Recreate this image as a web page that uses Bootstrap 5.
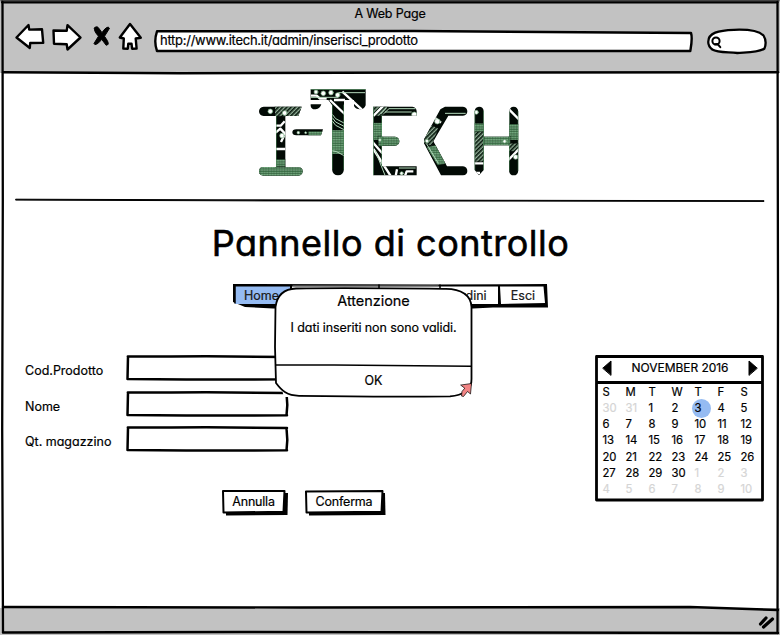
<!DOCTYPE html>
<html lang="it">
<head>
<meta charset="utf-8">
<meta name="viewport" content="width=device-width, initial-scale=1">
<title>A Web Page</title>
<link href="https://cdn.jsdelivr.net/npm/bootstrap@5.3.0/dist/css/bootstrap.min.css" rel="stylesheet">
<style>
body{font-family:Inter,"Open Sans",sans-serif;font-feature-settings:"cv11";font-size:12.5px;line-height:16px;color:#000;-webkit-text-stroke:.2px #000;width:780px;height:635px;overflow:hidden}
svg{display:block;overflow:visible;fill:none;stroke:#000;stroke-linecap:round;stroke-linejoin:round}
.sketch{position:absolute;left:0;top:0;z-index:0}
.over{z-index:1}
.browser-bar{height:73px;background:#c2c2c2}
.browser-title{height:22px;padding-top:6px;letter-spacing:-.17px}
.tools{height:51px;padding-left:15px}
.url{width:540px;height:23px;margin-left:11px;padding:2px 0 0 6px;font-size:13px;letter-spacing:-.27px}
.search{margin-left:12px}
.page-area{height:535px}
.logo{padding-top:7px}
.divider{margin:4px 0 0 15px}
.title{font-size:36px;line-height:44px;letter-spacing:.5px;font-weight:400;margin:18px 0 0;padding-left:1px;-webkit-text-stroke:.6px #000}
.menu{width:315px;height:25px;margin:19px 0 0 233px}
.menu a{color:#222;text-decoration:none;padding-top:4px;text-align:center;height:22px}
.main-row{padding-left:25px;margin-top:46px}
.form-line{height:25px}
.form-line label{width:101px;padding-top:7px}
.field{width:162px;height:25px}
.field input{width:154px;height:19px;margin:3px;border:0;background:none;padding:0 4px;outline:0}
.actions{margin:39px 0 0 197px;gap:17px}
.sk-btn{background:none;border:0;padding:0 3px 3px 0;height:26px;letter-spacing:-.2px;color:#000;-webkit-text-stroke:.2px #000}
.cal{width:169px;height:147px;margin-left:auto;margin-right:16px}
.cal-head{height:28px;padding:0 7px 2px 8px;font-size:12px;letter-spacing:-.05px}
.cal-grid{display:grid;grid-template-columns:repeat(7,23px);grid-auto-rows:16.15px;padding:1px 0 0 7.5px;font-size:11.3px;letter-spacing:-.1px;line-height:16px}
.out{color:#d5d5d5;-webkit-text-stroke-color:#d5d5d5}
.day-on{position:relative}
.day-on::before{content:"";position:absolute;left:-2.5px;top:-1px;width:19px;height:19px;border-radius:50%;background:#95bbf2;z-index:-1}
.alert-box{position:absolute;left:274px;top:287px;width:199px;height:111px;z-index:5}
.alert-title{font-size:14.5px;padding-top:6px;letter-spacing:-.05px;-webkit-text-stroke:.2px #000}
.alert-text{padding-top:11px;height:64px;letter-spacing:-.09px}
.status{height:27px;background:#c2c2c2}
</style>
</head>
<body class="position-relative bg-white">
<header class="browser-bar">
  <div class="browser-title text-center">A Web Page</div>
  <div class="tools d-flex align-items-start position-relative">
    <svg width="128" height="32" stroke-width="2.4">
      <path fill="#fff" d="M1.500 15.500 13.500 3l.7 4.600L27 7.300l1.200 13.500-13 .2-.4 5L1.500 15.500z"/>
      <path fill="#fff" d="M38.500 8.500l13.200.3L52.500 3.200l13 12.300L52.500 27.500l-.8-5.300-12.700-.4z"/>
      <path fill="#000" stroke-width="1" d="M79.500 6c1.400-2 3.500-1.300 4.500.5l3 4.200c1.800-2.700 4-5.400 6.200-5.600l1.300 1.200-5 8c2 3 4.200 5.600 3.700 8l-2 1-4.500-6c-1.700 2.400-4.200 5.200-6.800 5.300l-.9-1.100 4.500-7.300c-2.300-2.500-4.700-5.600-4-8.200z"/>
      <path fill="#fff" d="M115 2 104.800 15.500l4 1-.5 10 4.500.2.500-5h3.200l.6 5 4.500-.2-.9-10 5.100-.8z"/>
    </svg>
    <div class="url position-relative">
      <svg class="sketch" width="540" height="24" stroke-width="2.4"><path fill="#fff" d="M3 9.300 260 9l277 2c1.700 5 .3 12-.7 18H3C.5 22 .7 16 3 9.300z"/></svg>
      <div class="position-relative over mt-2">http://www.itech.it/admin/inserisci_prodotto</div>
    </div>
    <svg class="search" width="62" height="40" stroke-width="2.300">
      <path fill="#fff" d="M2.300 19.500C2.500 11 12 8.300 28 7.800c15-.6 25 1.300 29.500 5.700 2.200 3.500 2.600 9 .8 13.300-7 4-17 3.500-27 4.200-11-1-20-.3-25-3.500-3-2.500-4.300-4.500-4-8z"/>
      <g stroke-width="2"><circle cx="10" cy="19" r="3.600"/><path d="M9 22.300 11.500 22l2.800 3.200"/></g>
    </svg>
  </div>
</header>

<main class="page-area">
  <div class="logo">
    <svg width="290" height="115" viewBox="0 0 870 345" style="margin-left:245px" role="img" aria-label="I-TECH" stroke="none">
      <defs>
        <pattern id="hl" width="8" height="7" patternUnits="userSpaceOnUse"><rect width="8" height="7" fill="#7cb488"/><path d="M0 1.500h8" stroke="#2b6238" stroke-width="2.200" stroke-linecap="butt"/></pattern>
        <pattern id="dl" width="9" height="9" patternUnits="userSpaceOnUse" patternTransform="rotate(-45)"><rect width="9" height="9" fill="#b9dcc0"/><path d="M0 2.500h9" stroke="#04150a" stroke-width="5" stroke-linecap="butt"/></pattern>
        <clipPath id="letters">
          <path d="M56 80H170L160 108H121V262H160Q173 262 173 274T160 287H56Q42 287 42 274T56 261H93V108H56Q42 106 42 94T56 80zM154 148H234L228 166H154Q142 166 142 157T154 148zM197 28H362V76Q358 88 345 88T327 78V60H297V268Q295 286 279 286T261 268V75L250 60H197zM197 73H229Q225 87 212 88T197 78zM385 80H502Q515 82 515 94V107H411V170H450Q463 172 463 184T450 197H411V259H515V286H385zM600 80H654Q667 82 667 94T654 107H610L565 184 606 259H654Q667 261 667 273T654 286H588L537 190 538 176 586 88zM702 80Q716 80 716 94V170H793V94Q794 80 806 80T820 94V272Q818 286 806 286T792 272V196H716V270L702 286 689 270V94Q690 81 702 80z"/>
        </clipPath>
      </defs>
      <g clip-path="url(#letters)">
        <path fill="#020a05" d="M30 20H830V290H30z"/>
        <path fill="url(#hl)" d="M40 259H175V290H40zM92 238H122V262H92zM260 150H299V222H260zM385 128H413V180H385zM400 168H465V199H400zM688 130H717V158H688zM716 168H796V198H716zM792 132H822V180H792zM190 154H236V168H190z"/>
        <path fill="url(#dl)" d="M90 78H170V109H90zM385 78H430L410 108H385zM545 130 580 145 560 198 535 190zM688 155H717V245H688zM792 190H822V214H792z"/>
        <path fill="url(#hl)" d="M545 202 572 195 603 251 578 256z"/>
        <g fill="none" stroke="#fff" stroke-width="7" stroke-linecap="butt">
          <path d="M93 137h14l12-13M92 158l14-12 14 15-12 25M92 207H122M198 47H215L225 56H245M267 60H300M292 35 350 88M255 60 299 102M385 207 437 288M380 183 412 220M385 108 416 76M688 250H717M688 279H705M790 240 822 207M792 88 822 118M566 111 588 128M452 288 456 268M480 288l5-14h20"/>
          <path stroke="#b4dabc" stroke-width="3" d="M197 52H280M280 38H360M262 103 272 116 299 130M262 113 272 126 299 140M262 123 272 136 299 150M261 212 275 215 299 228M415 102 432 86H512M407 102 424 84M588 82 568 115 545 158M600 100H662M420 96H500M545 192 580 250M390 210 420 286M462 264H512"/>
        </g>
        <g fill="#fff" stroke="#78ae84" stroke-width="2"><circle cx="76" cy="94" r="7"/><circle cx="119" cy="99" r="7"/><circle cx="111" cy="167" r="7"/><circle cx="213" cy="36" r="6"/><circle cx="235" cy="40" r="7"/><circle cx="258" cy="38" r="7"/><circle cx="278" cy="45" r="7"/><circle cx="160" cy="158" r="4"/><circle cx="182" cy="158" r="3"/><circle cx="508" cy="104" r="8"/><circle cx="577" cy="124" r="8"/><circle cx="546" cy="183" r="5"/><circle cx="694" cy="97" r="6"/><circle cx="812" cy="231" r="7"/><circle cx="779" cy="184" r="5"/><circle cx="405" cy="180" r="4"/><circle cx="470" cy="280" r="5"/></g>
        <path fill="none" stroke="#4d8d5b" stroke-width="3" d="M385 80V286M93 108V262M261 75V268M297 75V268M197 28H362M411 107V259M689 94V270M716 94V270M792 94V272M820 94V272"/>
      </g>
    </svg>
  </div>
  <svg class="divider" width="750" height="4" stroke="none"><path fill="#000" d="M1 .2 200 .8 420 1.200 749 1.700V2.400L500 2.100 250 1.900 1 1.100z"/></svg>
  <h1 class="title text-center">Pannello di controllo</h1>

  <nav class="menu position-relative">
    <svg class="sketch" width="316" height="26">
      <path fill="#000" stroke="none" d="M0 0 200 .5 314 0 315 23.500 260 23.500 240 24.500 40 24.500 12 23 0 18z"/>
      <path fill="#fff" stroke="none" d="M267 2.500H310.500L312 19 268 20zM59 2.500H265V20H59z"/>
      <path fill="#95bbf2" stroke="none" d="M2 2.500 57 2.500V20L2 20z"/>
      <path stroke="#858585" stroke-width="1.500" d="M60 2.200H205"/><path stroke-width="1.500" d="M58 1V20M146 1V20M207 1V20M2 1V19"/>
    </svg>
    <div class="d-flex position-relative over">
      <a href="#" style="width:57px">Home</a>
      <a href="#" style="width:85px" aria-label="2"></a>
      <a href="#" style="width:65px" aria-label="3"></a>
      <a href="#" style="width:58px">Ordini</a>
      <a href="#" style="width:50px">Esci</a>
    </div>
  </nav>

  <div class="main-row d-flex align-items-start">
    <form>
      <div class="form-line d-flex align-items-center"><label for="f1">Cod.Prodotto</label><div class="field position-relative"><svg class="sketch" width="162" height="26"><use href="#box"/></svg><input id="f1" class="position-relative over"></div></div>
      <div class="form-line d-flex align-items-center" style="margin-top:11px"><label for="f2">Nome</label><div class="field position-relative"><svg class="sketch" width="162" height="26"><use href="#box"/></svg><input id="f2" class="position-relative over"></div></div>
      <div class="form-line d-flex align-items-center" style="margin-top:10px"><label for="f3">Qt. magazzino</label><div class="field position-relative"><svg class="sketch" width="162" height="26">
        <g id="box"><path stroke-width="2.500" d="M1.800 1.500 45 1.600 80 1.300 161 2M2 1.500 1.500 24M1.500 24 60 24.600 161 24.300M160.500 2 161.300 14 160.500 24.500"/></g></svg><input id="f3" class="position-relative over"></div></div>
      <div class="actions d-flex">
        <button type="button" class="sk-btn position-relative" style="width:66px"><svg class="sketch" width="66" height="26"><path fill="#000" stroke="none" d="M4 3 66 3 65.500 25 4 25.500z"/><path fill="#fff" stroke-width="2" d="M1 1 62.500 1 61.500 21.800 1.500 22.500z"/></svg><span class="position-relative over">Annulla</span></button>
        <button type="button" class="sk-btn position-relative" style="width:81px"><svg class="sketch" width="81" height="26"><path fill="#000" stroke="none" d="M4 3 80 3 80.500 25 4 25.500z"/><path fill="#fff" stroke-width="2" d="M1 1.500 77.500 1 76.500 21.800 1.500 22.500z"/></svg><span class="position-relative over">Conferma</span></button>
      </div>
    </form>
    <section class="cal position-relative">
      <svg class="sketch" width="169" height="147" stroke-width="2.800"><path d="M1.500 1.500H167.500V145H1.500zM1.500 27.500H167.500"/></svg>
      <div class="position-relative over">
        <div class="cal-head d-flex align-items-center justify-content-between">
          <svg width="8" height="14" stroke="none"><path fill="#000" d="M0 7 8 0V14z"/></svg>
          <span>NOVEMBER 2016</span>
          <svg width="8" height="14" stroke="none"><path fill="#000" d="M8 7 0 0V14z"/></svg>
        </div>
        <div class="cal-grid">
          <span>S</span><span>M</span><span>T</span><span>W</span><span>T</span><span>F</span><span>S</span>
          <span class="out">30</span><span class="out">31</span><span>1</span><span>2</span><span class="day-on">3</span><span>4</span><span>5</span>
          <span>6</span><span>7</span><span>8</span><span>9</span><span>10</span><span>11</span><span>12</span>
          <span>13</span><span>14</span><span>15</span><span>16</span><span>17</span><span>18</span><span>19</span>
          <span>20</span><span>21</span><span>22</span><span>23</span><span>24</span><span>25</span><span>26</span>
          <span>27</span><span>28</span><span>29</span><span>30</span><span class="out">1</span><span class="out">2</span><span class="out">3</span>
          <span class="out">4</span><span class="out">5</span><span class="out">6</span><span class="out">7</span><span class="out">8</span><span class="out">9</span><span class="out">10</span>
        </div>
      </div>
    </section>
  </div>
</main>

<footer class="status"></footer>

<div class="alert-box text-center" role="alertdialog">
  <svg class="sketch" width="199" height="111" stroke-width="1.800"><path fill="#fff" stroke="none" d="M6 96H20V110H10z"/><path fill="#fff" d="M1.500 20C3 9 9 2 22 1.500 70 .8 120 1.300 172 1.800 187 2 197 8 197.500 20L197.500 92C198 102 189 108.500 176 109.300 120 110 70 109.500 25 108.800 13 108.500 8 104 2 96L1 60z"/><path stroke-width="1.600" d="M2 78 60 78 197 79.200"/></svg>
  <div class="position-relative over pe-1">
    <div class="alert-title ps-1">Attenzione</div>
    <div class="alert-text ps-1">I dati inseriti non sono validi.</div>
    <div class="ps-1">OK</div>
  </div>
  <svg class="sketch over" width="199" height="111" stroke="#8c7474" stroke-width=".7"><path fill="#f28585" d="M187 98 197.500 96.500 196.500 107 193.500 104.500 189.500 109.500 187.500 109 188 104.500 190.500 101.500z"/></svg>
</div>

<svg class="sketch over pe-none" width="780" height="635" stroke-width="2.300">
  <path stroke="#444" stroke-width="1.500" d="M1 .8H779"/>
  <path d="M2 2.300H777.500"/>
  <path d="M2.500 2 2.800 200 2.200 430 3 632M777.500 2 778 300 777.500 633"/>
  <path stroke-width="2.600" d="M3 72.300 140 73 180 73.200 430 72.500 778 72.300"/>
  <path stroke-width="2.400" d="M3 607 300 607.500 690 607 778 610"/>
  <path stroke-width="2.500" d="M3 632.500 240 632 778 633"/>
  <path stroke-width="3.200" d="M760.500 624 766 618M763.500 627 772.500 619"/>
</svg>
<script src="https://cdn.jsdelivr.net/npm/bootstrap@5.3.0/dist/js/bootstrap.bundle.min.js"></script>
</body>
</html>
